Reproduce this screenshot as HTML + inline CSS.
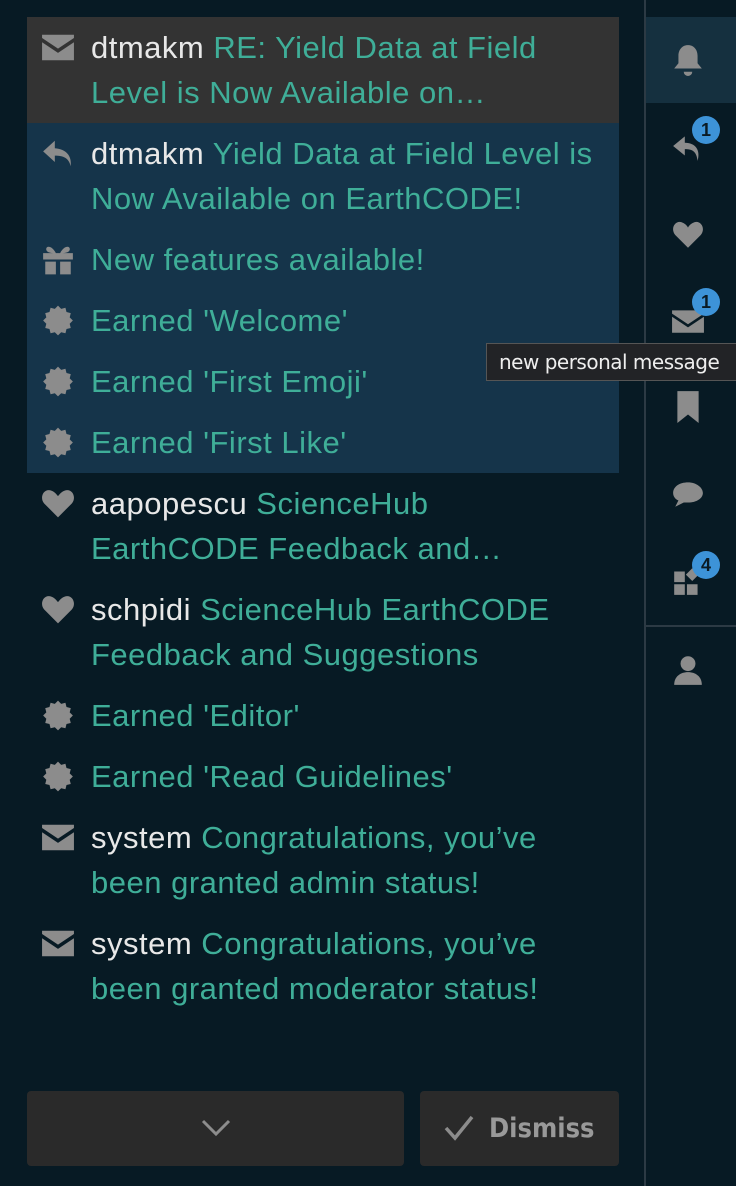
<!DOCTYPE html>
<html><head><meta charset="utf-8"><style>
*{margin:0;padding:0;box-sizing:border-box}
body{width:736px;height:1186px;background:#071a24;font-family:"Liberation Sans",sans-serif;position:relative;overflow:hidden}
.panel{position:absolute;left:27px;top:17px;width:592px}
.it{position:relative;padding:8px 20px 8px 64px;font-size:31px;line-height:45px;color:#3fae98;letter-spacing:0.5px}
.it .u{color:#e8e8e8}
.it svg{position:absolute;left:14px;top:15px;width:34px;height:31px;fill:#8c8c8c}
.dark{background:#333333}
.blue{background:#15344a}
.sep{position:absolute;left:644px;top:0;width:2px;height:1186px;background:#2c3a44}
.side{position:absolute;left:646px;top:0;width:90px}
.ic{position:absolute;left:0;width:84px;height:86px;display:flex;align-items:center;justify-content:center}
.ic svg{width:34px;height:34px;fill:#8c8c8c}
.badge{position:absolute;width:28px;height:28px;border-radius:50%;background:#3d93d8;color:#0a1a24;font-weight:bold;font-size:18px;text-align:center;line-height:28px}
.btn{position:absolute;top:1091px;height:75px;background:#2a2a2a;border-radius:4px}
.tip{position:absolute;left:486px;top:343px;width:260px;height:38px;background:#222326;border:1px solid #555;color:#eee;font-size:20px;line-height:36px;padding-left:12px;font-family:"DejaVu Sans",sans-serif;letter-spacing:-0.5px}
</style></head><body>
<div class="panel">
<div class="it dark" style="height:106px"><svg viewBox="0 0 32 28"><path d="M1 2h30v3L16 15 1 5z M1 9l15 10 15-10v17H1z"/></svg><span class="u">dtmakm</span> RE: Yield Data at Field Level is Now Available on…</div>
<div class="blue">
<div class="it"><svg viewBox="0 0 32 28"><path d="M13 2L2 12l11 10v-6c8 0 13 2 15 10 1-10-4-16-15-17z"/></svg><span class="u">dtmakm</span> Yield Data at Field Level is Now Available on EarthCODE!</div>
<div class="it"><svg viewBox="0 0 32 28"><path d="M2 8h28v6H2z M4 16h10v12H4z M18 16h10v12H18z M14 8c-4-8-10-7-9-3 1 3 6 3 9 3z M18 8c4-8 10-7 9-3-1 3-6 3-9 3z"/></svg>New features available!</div>
<div class="it"><svg viewBox="0 0 32 28"><path d="M16 0l3 3 4-1 1 4 4 1-1 4 3 3-3 3 1 4-4 1-1 4-4-1-3 3-3-3-4 1-1-4-4-1 1-4-3-3 3-3-1-4 4-1 1-4 4 1z"/></svg>Earned 'Welcome'</div>
<div class="it"><svg viewBox="0 0 32 28"><path d="M16 0l3 3 4-1 1 4 4 1-1 4 3 3-3 3 1 4-4 1-1 4-4-1-3 3-3-3-4 1-1-4-4-1 1-4-3-3 3-3-1-4 4-1 1-4 4 1z"/></svg>Earned 'First Emoji'</div>
<div class="it"><svg viewBox="0 0 32 28"><path d="M16 0l3 3 4-1 1 4 4 1-1 4 3 3-3 3 1 4-4 1-1 4-4-1-3 3-3-3-4 1-1-4-4-1 1-4-3-3 3-3-1-4 4-1 1-4 4 1z"/></svg>Earned 'First Like'</div>
</div>
<div class="it"><svg viewBox="0 0 32 28"><path d="M16 27L3 14C-2 8 3-1 10 2c3 1 5 4 6 5 1-1 3-4 6-5 7-3 12 6 7 12z"/></svg><span class="u">aapopescu</span> ScienceHub<br>EarthCODE Feedback and…</div>
<div class="it"><svg viewBox="0 0 32 28"><path d="M16 27L3 14C-2 8 3-1 10 2c3 1 5 4 6 5 1-1 3-4 6-5 7-3 12 6 7 12z"/></svg><span class="u">schpidi</span> ScienceHub EarthCODE Feedback and Suggestions</div>
<div class="it"><svg viewBox="0 0 32 28"><path d="M16 0l3 3 4-1 1 4 4 1-1 4 3 3-3 3 1 4-4 1-1 4-4-1-3 3-3-3-4 1-1-4-4-1 1-4-3-3 3-3-1-4 4-1 1-4 4 1z"/></svg>Earned 'Editor'</div>
<div class="it"><svg viewBox="0 0 32 28"><path d="M16 0l3 3 4-1 1 4 4 1-1 4 3 3-3 3 1 4-4 1-1 4-4-1-3 3-3-3-4 1-1-4-4-1 1-4-3-3 3-3-1-4 4-1 1-4 4 1z"/></svg>Earned 'Read Guidelines'</div>
<div class="it"><svg viewBox="0 0 32 28"><path d="M1 2h30v3L16 15 1 5z M1 9l15 10 15-10v17H1z"/></svg><span class="u">system</span> Congratulations, you’ve been granted admin status!</div>
<div class="it"><svg viewBox="0 0 32 28"><path d="M1 2h30v3L16 15 1 5z M1 9l15 10 15-10v17H1z"/></svg><span class="u">system</span> Congratulations, you’ve been granted moderator status!</div>
</div>
<div class="btn" style="left:27px;width:377px"><svg style="position:absolute;left:174px;top:28px" width="30" height="18" viewBox="0 0 30 18"><path d="M2 2l13 13L28 2" stroke="#8c8c8c" stroke-width="3" fill="none"/></svg></div>
<div class="btn" style="left:420px;width:199px"><svg style="position:absolute;left:24px;top:24px" width="30" height="26" viewBox="0 0 30 26"><path d="M2 13l9 10L28 2" stroke="#8c8c8c" stroke-width="3.5" fill="none"/></svg><span style="position:absolute;left:69px;top:18px;font-size:27px;font-weight:bold;color:#999;line-height:40px;font-family:'DejaVu Sans Condensed','Liberation Sans Narrow',sans-serif">Dismiss</span></div>
<div class="sep"></div>
<div class="side">
<div style="position:absolute;top:17px;left:0;width:90px;height:86px;background:#15303f"></div>
<div class="ic" style="top:17px"><svg viewBox="0 0 32 32"><path d="M16 2c-6 0-9 5-9 10v7l-4 5h26l-4-5v-7c0-5-3-10-9-10z M12 27a4 4 0 0 0 8 0z"/></svg></div>
<div class="ic" style="top:104px"><svg viewBox="0 0 32 32"><path d="M13 6L2 15l11 9v-6c7 0 11 2 12 11 3-10-2-17-12-17z"/></svg></div>
<div class="ic" style="top:192px"><svg viewBox="0 0 32 32"><path d="M16 28L4 16C-1 10 4 2 10 4c3 1 5 3 6 5 1-2 3-4 6-5 6-2 11 6 6 12z"/></svg></div>
<div class="ic" style="top:278px"><svg viewBox="0 0 32 32"><path d="M1 6h30v3L16 19 1 9z M1 12l15 10 15-10v15H1z"/></svg></div>
<div class="ic" style="top:364px"><svg viewBox="0 0 32 32"><path d="M6 1h20v30l-10-8-10 8z"/></svg></div>
<div class="ic" style="top:451px"><svg viewBox="0 0 32 32"><path d="M16 5C8 5 2 9 2 15c0 3 2 6 5 7l-3 6 8-4c1 0 3 0 4 0 8 0 14-4 14-9S24 5 16 5z"/></svg></div>
<div class="ic" style="top:538px"><svg viewBox="0 0 32 32"><path d="M3 7h10v10H3z M3 19h10v10H3z M15 19h10v10H15z M20 4l6 6-6 6-6-6z"/></svg></div>
<div style="position:absolute;top:625px;left:0;width:90px;height:2px;background:#2c3a44"></div>
<div class="ic" style="top:627px"><svg viewBox="0 0 32 32"><circle cx="16" cy="10" r="7"/><path d="M3 30c0-8 6-12 13-12s13 4 13 12z"/></svg></div>
<div class="badge" style="left:46px;top:116px">1</div>
<div class="badge" style="left:46px;top:288px">1</div>
<div class="badge" style="left:46px;top:551px">4</div>
</div>
<div class="tip">new personal message</div>
</body></html>
